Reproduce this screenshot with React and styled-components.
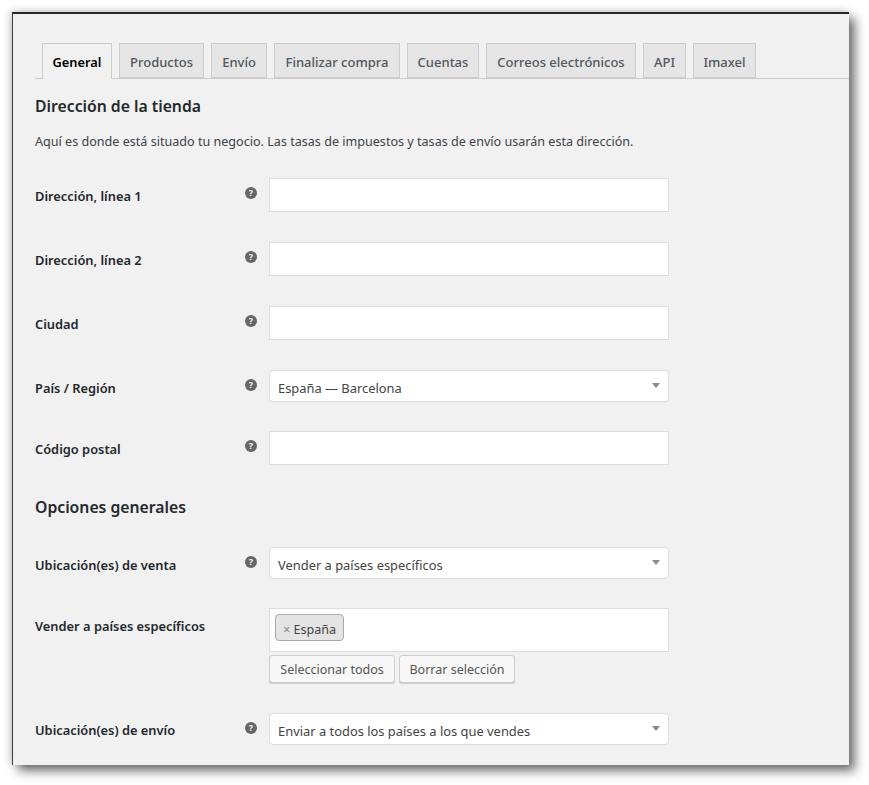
import React from "react";
import styled, { createGlobalStyle } from "styled-components";

const Global = createGlobalStyle`
  html, body { margin: 0; padding: 0; background: #fff; }
  body { font-family: "Noto Sans", "Open Sans", sans-serif; color: #2c3338; }
`;
const Stage = styled.div`
  width: 869px; height: 785px; padding: 12px 0 0 12px; box-sizing: border-box; overflow: hidden;
`;
const Panel = styled.main`
  position: relative;
  width: 837px; height: 753px; box-sizing: border-box; overflow: hidden;
  background: #f1f1f1;
  border-top: 2px solid #23282d;
  border-left: 1px solid #3a3f44;
  padding: 29px 0 0 22px;
`;
const Window = styled.div`
  width: 837px; height: 753px;
  box-shadow: 6px 6px 10px rgba(0,0,0,.55), -2px -1px 8px rgba(0,0,0,.18);
`;
const Marker = styled.i`
  position: absolute; left: -1px; width: 1px; height: 10px; background: #0a87c2;
  top: ${p => p.$top}px;
`;
const Tabs = styled.nav`
  display: flex; gap: 7px; padding-left: 7px; height: 35px; box-sizing: content-box;
  border-bottom: 1px solid #ccc;
`;
const Tab = styled.a`
  box-sizing: border-box; height: ${p => (p.$active ? 36 : 35)}px; padding: ${p => (p.$active ? 1 : 2)}px 0 0;
  display: flex; align-items: center; justify-content: center;
  width: ${p => p.$w}px; white-space: nowrap;
  font-size: ${p => (p.$active ? 12.8 : 13)}px; font-weight: ${p => (p.$active ? 600 : 500)};
  color: ${p => (p.$active ? "#000" : "#50575e")};
  background: ${p => (p.$active ? "#f1f1f1" : "#e5e5e5")};
  border: 1px solid #ccc;
  border-bottom: ${p => (p.$active ? "0" : "1px solid #ccc")};
`;
const Heading = styled.h2`
  margin: ${p => p.$top}px 0 0; font-size: 15.75px; line-height: 24px; font-weight: 600; color: #23282d;
`;
const Description = styled.p`
  margin: 14px 0 0; font-size: 12.58px; line-height: 20px; color: #3c434a; white-space: nowrap;
`;
const Row = styled.div`
  display: grid; grid-template-columns: 210px 24px 400px; align-items: start;
  margin-top: ${p => p.$top}px;
`;
const Label = styled.label`
  font-size: 12.85px; font-weight: 600; line-height: 20px; color: #23282d;
  padding-top: ${p => p.$pad}px; white-space: nowrap;
`;
const Help = styled.span`
  width: 12px; height: 12px; border-radius: 50%; background: #666; color: #f1f1f1;
  font-size: 9px; font-weight: 700; line-height: 12px; text-align: center; margin-top: ${p => p.$pad}px;
`;
const Input = styled.input`
  display: block; width: 400px; height: 34px; box-sizing: border-box; margin: 0; padding: 0;
  background: #fff; border: 1px solid #ddd; outline: none;
`;
const Select = styled.div`
  position: relative; width: 400px; height: 32px; box-sizing: border-box;
  background: #fff; border: 1px solid #ddd; border-radius: 4px;
  padding: 0 30px 0 8px; font-size: 12.9px; line-height: 34px; color: #444; white-space: nowrap;
  &::after {
    content: ""; position: absolute; right: 8px; top: 12px;
    border-left: 4px solid transparent; border-right: 4px solid transparent; border-top: 5px solid #888;
  }
`;
const Multi = styled.div`
  width: 400px; height: 44px; box-sizing: border-box; background: #fff; border: 1px solid #ddd;
  padding: 5px;
`;
const Chip = styled.span`
  display: inline-flex; align-items: center; height: 27px; box-sizing: border-box; width: 69px;
  padding: 3px 0 0 7px; background: #e4e4e4; border: 1px solid #aaa; border-radius: 4px;
  font-size: 12.6px; color: #444; white-space: nowrap;
`;
const ChipX = styled.span`
  color: #888; font-size: 13px; margin-right: 3px;
`;
const Buttons = styled.div`
  display: flex; gap: 4px; margin-top: 3px;
`;
const Button = styled.button`
  height: 28px; box-sizing: border-box; padding: 0; margin: 0; width: ${p => p.$w}px;
  background: #f7f7f7; border: 1px solid #ccc; border-radius: 3px; box-shadow: 0 1px 0 #ccc;
  font-family: inherit; font-size: 12.5px; color: #555; white-space: nowrap;
`;

const tabs = [
  ["General", 70], ["Productos", 85], ["Envío", 56], ["Finalizar compra", 126],
  ["Cuentas", 72], ["Correos electrónicos", 150], ["API", 43], ["Imaxel", 63],
];

export default function App() {
  return (
    <Stage>
      <Global />
      <Window>
        <Panel>
          <Marker $top={114} />
          <Marker $top={138} />
          <Tabs>
            {tabs.map(([t, w], i) => <Tab key={t} $w={w} $active={i === 0}>{t}</Tab>)}
          </Tabs>
          <Heading $top={15}>Dirección de la tienda</Heading>
          <Description>Aquí es donde está situado tu negocio. Las tasas de impuestos y tasas de envío usarán esta dirección.</Description>
          <Row $top={26}><Label $pad={8}>Dirección, línea 1</Label><Help $pad={9}>?</Help><Input /></Row>
          <Row $top={30}><Label $pad={8}>Dirección, línea 2</Label><Help $pad={9}>?</Help><Input /></Row>
          <Row $top={30}><Label $pad={8}>Ciudad</Label><Help $pad={9}>?</Help><Input /></Row>
          <Row $top={30}><Label $pad={8}>País / Región</Label><Help $pad={9}>?</Help><Select>España — Barcelona</Select></Row>
          <Row $top={29}><Label $pad={8}>Código postal</Label><Help $pad={9}>?</Help><Input /></Row>
          <Heading $top={30}>Opciones generales</Heading>
          <Row $top={28}><Label $pad={8}>Ubicación(es) de venta</Label><Help $pad={9}>?</Help><Select>Vender a países específicos</Select></Row>
          <Row $top={29}>
            <Label $pad={8}>Vender a países específicos</Label>
            <span />
            <div>
              <Multi><Chip><ChipX>×</ChipX>España</Chip></Multi>
              <Buttons>
                <Button $w={126}>Seleccionar todos</Button>
                <Button $w={116}>Borrar selección</Button>
              </Buttons>
            </div>
          </Row>
          <Row $top={30}><Label $pad={7}>Ubicación(es) de envío</Label><Help $pad={9}>?</Help><Select>Enviar a todos los países a los que vendes</Select></Row>
        </Panel>
      </Window>
    </Stage>
  );
}
